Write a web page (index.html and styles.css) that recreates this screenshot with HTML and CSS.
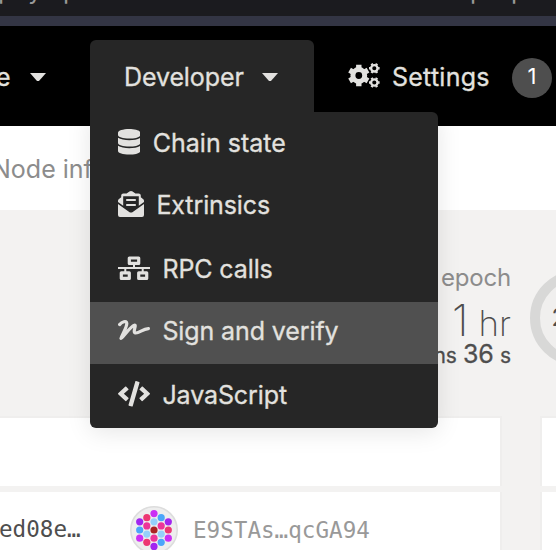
FILE: index.html
```html
<!DOCTYPE html>
<html lang="en">
<head>
<meta charset="utf-8">
<title>Explorer</title>
<link rel="stylesheet" href="styles.css">
</head>
<body>
<div class="browser"><span class="url url-a">p</span><span class="url url-b">y</span><span class="url url-c">p</span><span class="url url-d">p</span><span class="url url-e">p</span></div>
<header class="nav">
  <div class="governance"><span class="label">e</span><i class="caret"></i></div>
  <div class="developer"><span class="label dev-label">Developer</span><i class="caret"></i></div>
  <div class="settings">
    <svg class="cogs" viewBox="0 0 32 26"><g fill="none" stroke="currentColor"><circle cx="10.8" cy="12.5" r="5.9" stroke-width="5"/><path stroke-width="5.4" d="M10.8 5.2V1.8M10.8 19.8V23.2M4.5 8.8 1.6 7.1M17.1 8.8 20 7.1M4.5 16.2 1.6 17.9M17.1 16.2 20 17.9"/><g id="small-cog"><circle cx="26.3" cy="5.3" r="3.2" stroke-width="2.3"/><path stroke-width="2.4" d="M22.5 5.3H21M30.1 5.3H31.6M24.4 2 23.6.6M28.2 2 29 .6M24.4 8.6 23.6 10M28.2 8.6 29 10"/></g><use href="#small-cog" y="14.2"/></g></svg>
    <span class="label set-label">Settings</span><span class="count">1</span>
  </div>
  <nav class="menu">
    <a class="item"><svg style="width:22.4px" viewBox="0 0 448 512"><path fill="currentColor" d="M448 73.143v45.714C448 159.143 347.667 192 224 192S0 159.143 0 118.857V73.143C0 32.857 100.333 0 224 0s224 32.857 224 73.143zM448 176v102.857C448 319.143 347.667 352 224 352S0 319.143 0 278.857V176c48.125 33.143 136.208 48.572 224 48.572S399.874 209.143 448 176zm0 160v102.857C448 479.143 347.667 512 224 512S0 479.143 0 438.857V336c48.125 33.143 136.208 48.572 224 48.572S399.874 369.143 448 336z"/></svg><span class="label">Chain state</span></a>
    <a class="item"><svg style="width:26px" viewBox="0 0 26 26"><g fill="currentColor"><path d="M0 13 11.6 21.2Q13 22 14.4 21.2L26 13V24Q26 26 24 26H2Q0 26 0 24Z"/><path fill-rule="evenodd" d="M0 11V9.8Q0 8.8 1 8L3.2 6.2V4.6Q3.2 2.4 5.4 2.4H8.6L11.4.5Q13-.5 14.6.5L17.4 2.4H20.6Q22.8 2.4 22.8 4.6V6.2L25 8Q26 8.8 26 9.8V11L20.8 14.7V5.2H5.2V14.7Z"/><path d="M8.2 8H17.8V10H8.2ZM8.2 13H17.8V15H8.2Z"/></g></svg><span class="label">Extrinsics</span></a>
    <a class="item"><svg style="width:32px" viewBox="0 0 32 26"><path fill="none" stroke="currentColor" stroke-width="3.2" stroke-linejoin="round" d="M11.3 3H20.7V8.4H11.3ZM3.3 17.8H11.3V23.4H3.3ZM20.7 17.8H28.7V23.4H20.7Z"/><path fill="none" stroke="currentColor" stroke-width="2" d="M0 13H32M16 9V13M7.3 13V17M24.7 13V17"/></svg><span class="label">RPC calls</span></a>
    <a class="item selected"><svg style="width:32px" viewBox="0 0 32 26"><path fill="none" stroke="currentColor" stroke-width="3.2" stroke-linecap="round" stroke-linejoin="round" d="M1.6 7.6C3.8 5 8.6 3 8.8 6.4 8.8 10.4 4.4 17 3 21.4 7.4 17.6 12.4 9.4 16.4 8.2 19 7.4 14.2 15.6 17.4 16 21.4 16.4 24.4 12 30.4 11.6"/></svg><span class="label">Sign and verify</span></a>
    <a class="item"><svg style="width:32px" viewBox="0 0 640 512"><path fill="currentColor" d="M278.9 511.5l-61-17.7c-6.4-1.8-10-8.5-8.2-14.9L346.2 8.7c1.8-6.4 8.5-10 14.9-8.2l61 17.7c6.4 1.8 10 8.5 8.2 14.9L293.8 503.3c-1.9 6.4-8.5 10.1-14.9 8.2zm-114-112.2l43.5-46.4c4.6-4.9 4.3-12.7-.8-17.2L117 256l90.6-79.7c5.1-4.5 5.5-12.3.8-17.2l-43.5-46.4c-4.5-4.8-12.1-5.1-17-.5L3.8 247.2c-5.1 4.7-5.1 12.8 0 17.5l144.1 135.1c4.9 4.6 12.5 4.4 17-.5zm327.2.6l144.1-135.1c5.1-4.7 5.1-12.8 0-17.5L492.1 112.1c-4.8-4.5-12.4-4.3-17 .5L431.6 159c-4.6 4.9-4.3 12.7.8 17.2L523 256l-90.6 79.7c-5.1 4.5-5.5 12.3-.8 17.2l43.5 46.4c4.5 4.9 12.1 5.1 17 .6z"/></svg><span class="label">JavaScript</span></a>
  </nav>
</header>
<div class="tabs"><span>Node info</span></div>
<section class="summary">
  <div class="epoch">
    <div class="title">epoch</div>
    <div class="hours">1 <small>hr</small></div>
    <div class="mins"><small>mins</small> 36 <small>s</small></div>
  </div>
  <div class="ring">29%</div>
</section>
<main class="tables">
  <div class="table"><div class="row head"></div><div class="row body">
    <span class="hash">ed08e…</span>
    <svg class="identicon" viewBox="0 0 48 48"><circle cx="24" cy="24" r="23.2" fill="#eee" stroke="#ddd" stroke-width="1.6"/>
      <g fill="#cb2ff4"><circle cx="24" cy="7.6" r="3.6"/><circle cx="9.7" cy="32.2" r="3.6"/><circle cx="38.3" cy="32.2" r="3.6"/></g>
      <g fill="#a226f0"><circle cx="9.7" cy="15.8" r="3.6"/><circle cx="38.3" cy="15.8" r="3.6"/><circle cx="24" cy="40.4" r="3.6"/></g>
      <g fill="#ed3772"><circle cx="16.8" cy="11.7" r="3.6"/><circle cx="38.3" cy="24" r="3.6"/><circle cx="16.8" cy="36.3" r="3.6"/></g>
      <g fill="#4ba6fa"><circle cx="31.2" cy="11.7" r="3.6"/><circle cx="9.7" cy="24" r="3.6"/><circle cx="31.2" cy="36.3" r="3.6"/></g>
      <g fill="#ed3599"><circle cx="16.8" cy="19.9" r="3.6"/><circle cx="31.2" cy="19.9" r="3.6"/><circle cx="24" cy="32.2" r="3.6"/></g>
      <g fill="#95d0fa"><circle cx="24" cy="15.8" r="3.6"/><circle cx="16.8" cy="28.1" r="3.6"/><circle cx="31.2" cy="28.1" r="3.6"/></g>
      <circle cx="24" cy="24" r="3.6" fill="#aa2222"/></svg>
    <span class="address">E9STAs…qcGA94</span>
  </div></div>
  <div class="table"><div class="row head"></div><div class="row body"></div></div>
</main>
</body>
</html>
```
FILE: styles.css
```css
* { box-sizing: border-box; }
html { overflow: hidden; }
body { margin: 0; width: 556px; height: 550px; overflow: hidden; background: #f3f2f1; font-family: Inter, "Liberation Sans", sans-serif; color: #4e4e4e; }
.browser { height: 26px; background: #1b1b1f; border-bottom: 10px solid #333544; display: flex; overflow: hidden; color: #999; font-size: 25px; line-height: 30px; }
.url { width: 16px; flex: none; margin-top: -25px; height: 30px; }
.url-a { margin-left: -2px; }
.url-b { margin-left: 14px; }
.url-c { margin-left: 19px; }
.url-d { margin-left: 391px; }
.url-e { margin-left: 25px; }
.nav { position: relative; height: 100px; background: #000; display: flex; color: #e2e1df; }
.label { font-size: 25px; line-height: 36px; white-space: nowrap; letter-spacing: -.1px; -webkit-text-stroke: .3px currentColor; }
.caret { width: 16px; height: 8px; background: currentColor; clip-path: polygon(0 0, 100% 0, 56% 100%, 44% 100%); }
.governance { width: 90px; display: flex; align-items: center; padding-top: 2px; }
.governance .label { margin-left: -4px; width: 14px; }
.governance .caret { margin-left: 20px; }
.developer { width: 224px; height: 86px; margin-top: 14px; background: #262626; border-radius: 6px 6px 0 0; display: flex; align-items: center; padding: 0 34px 12px; position: relative; z-index: 3; }
.dev-label { width: 138px; }
.settings { display: flex; align-items: center; padding-left: 34px; }
.cogs { width: 32px; height: 26px; flex: none; }
.set-label { margin: 2px 0 0 12px; width: 120px; letter-spacing: .25px; }
.count { width: 40px; height: 40px; margin-top: 3px; flex: none; border-radius: 50%; background: #4e4e4e; color: #fff; font-size: 22px; line-height: 37px; text-align: center; }
.menu { position: absolute; z-index: 2; left: 90px; top: 86px; width: 348px; height: 316px; padding-top: 2px; background: #262626; border-radius: 0 6px 6px 6px; box-shadow: 0 4px 24px rgba(0,0,0,.1); overflow: hidden; }
.item { height: 62px; display: flex; align-items: center; padding: 0 28px 4px; }
.item:nth-child(3), .item:nth-child(5) { margin-top: 2px; }
.item svg { height: 26px; flex: none; margin: 0 12.4px 2px 0; }
.item:nth-child(5) svg, .item:first-child svg { height: 25.6px; }
.item:first-child .label { letter-spacing: 0; }
.selected { background: #505050; }
.tabs { height: 84px; background: #fff; color: #8c8c8c; font-size: 25px; line-height: 86px; white-space: nowrap; }
.tabs span { margin-left: -8px; }
.summary { height: 206px; display: flex; overflow: hidden; }
.epoch { width: 511px; flex: none; text-align: right; padding-top: 50px; white-space: nowrap; }
.title { color: #8c8c8c; font-size: 24px; line-height: 36px; letter-spacing: -.2px; }
.hours { font-size: 43px; font-weight: 200; line-height: 49px; }
.hours small { font-size: 35px; margin-left: -2px; }
.mins { font-size: 25px; line-height: 18px; margin-top: -3px; font-weight: 400; -webkit-text-stroke: .3px currentColor; word-spacing: -1px; }
.mins small { font-size: 21px; }
.ring { width: 96px; height: 96px; flex: none; margin: 60px 0 0 19px; border: 10px solid #d8d8d7; border-radius: 50%; background: #f0efee; font-size: 24px; line-height: 76px; text-align: center; }
.tables { display: flex; gap: 38px; overflow: hidden; }
.table { width: 502px; flex: none; }
.table:last-child .row { border-left: 2px solid #efeeed; }
.row { background: #fff; border-right: 2px solid #efeeed; }
.head { height: 70px; border-top: 2px solid #efeeed; }
.body { height: 76px; margin-top: 6px; display: flex; align-items: center; font: 22.6px/36px "DejaVu Sans Mono", monospace; white-space: nowrap; }
.hash { width: 131px; margin: -2px 0 0 -1px; }
.identicon { width: 48px; height: 48px; flex: none; }
.address { margin-left: 15px; color: #999; }
```
